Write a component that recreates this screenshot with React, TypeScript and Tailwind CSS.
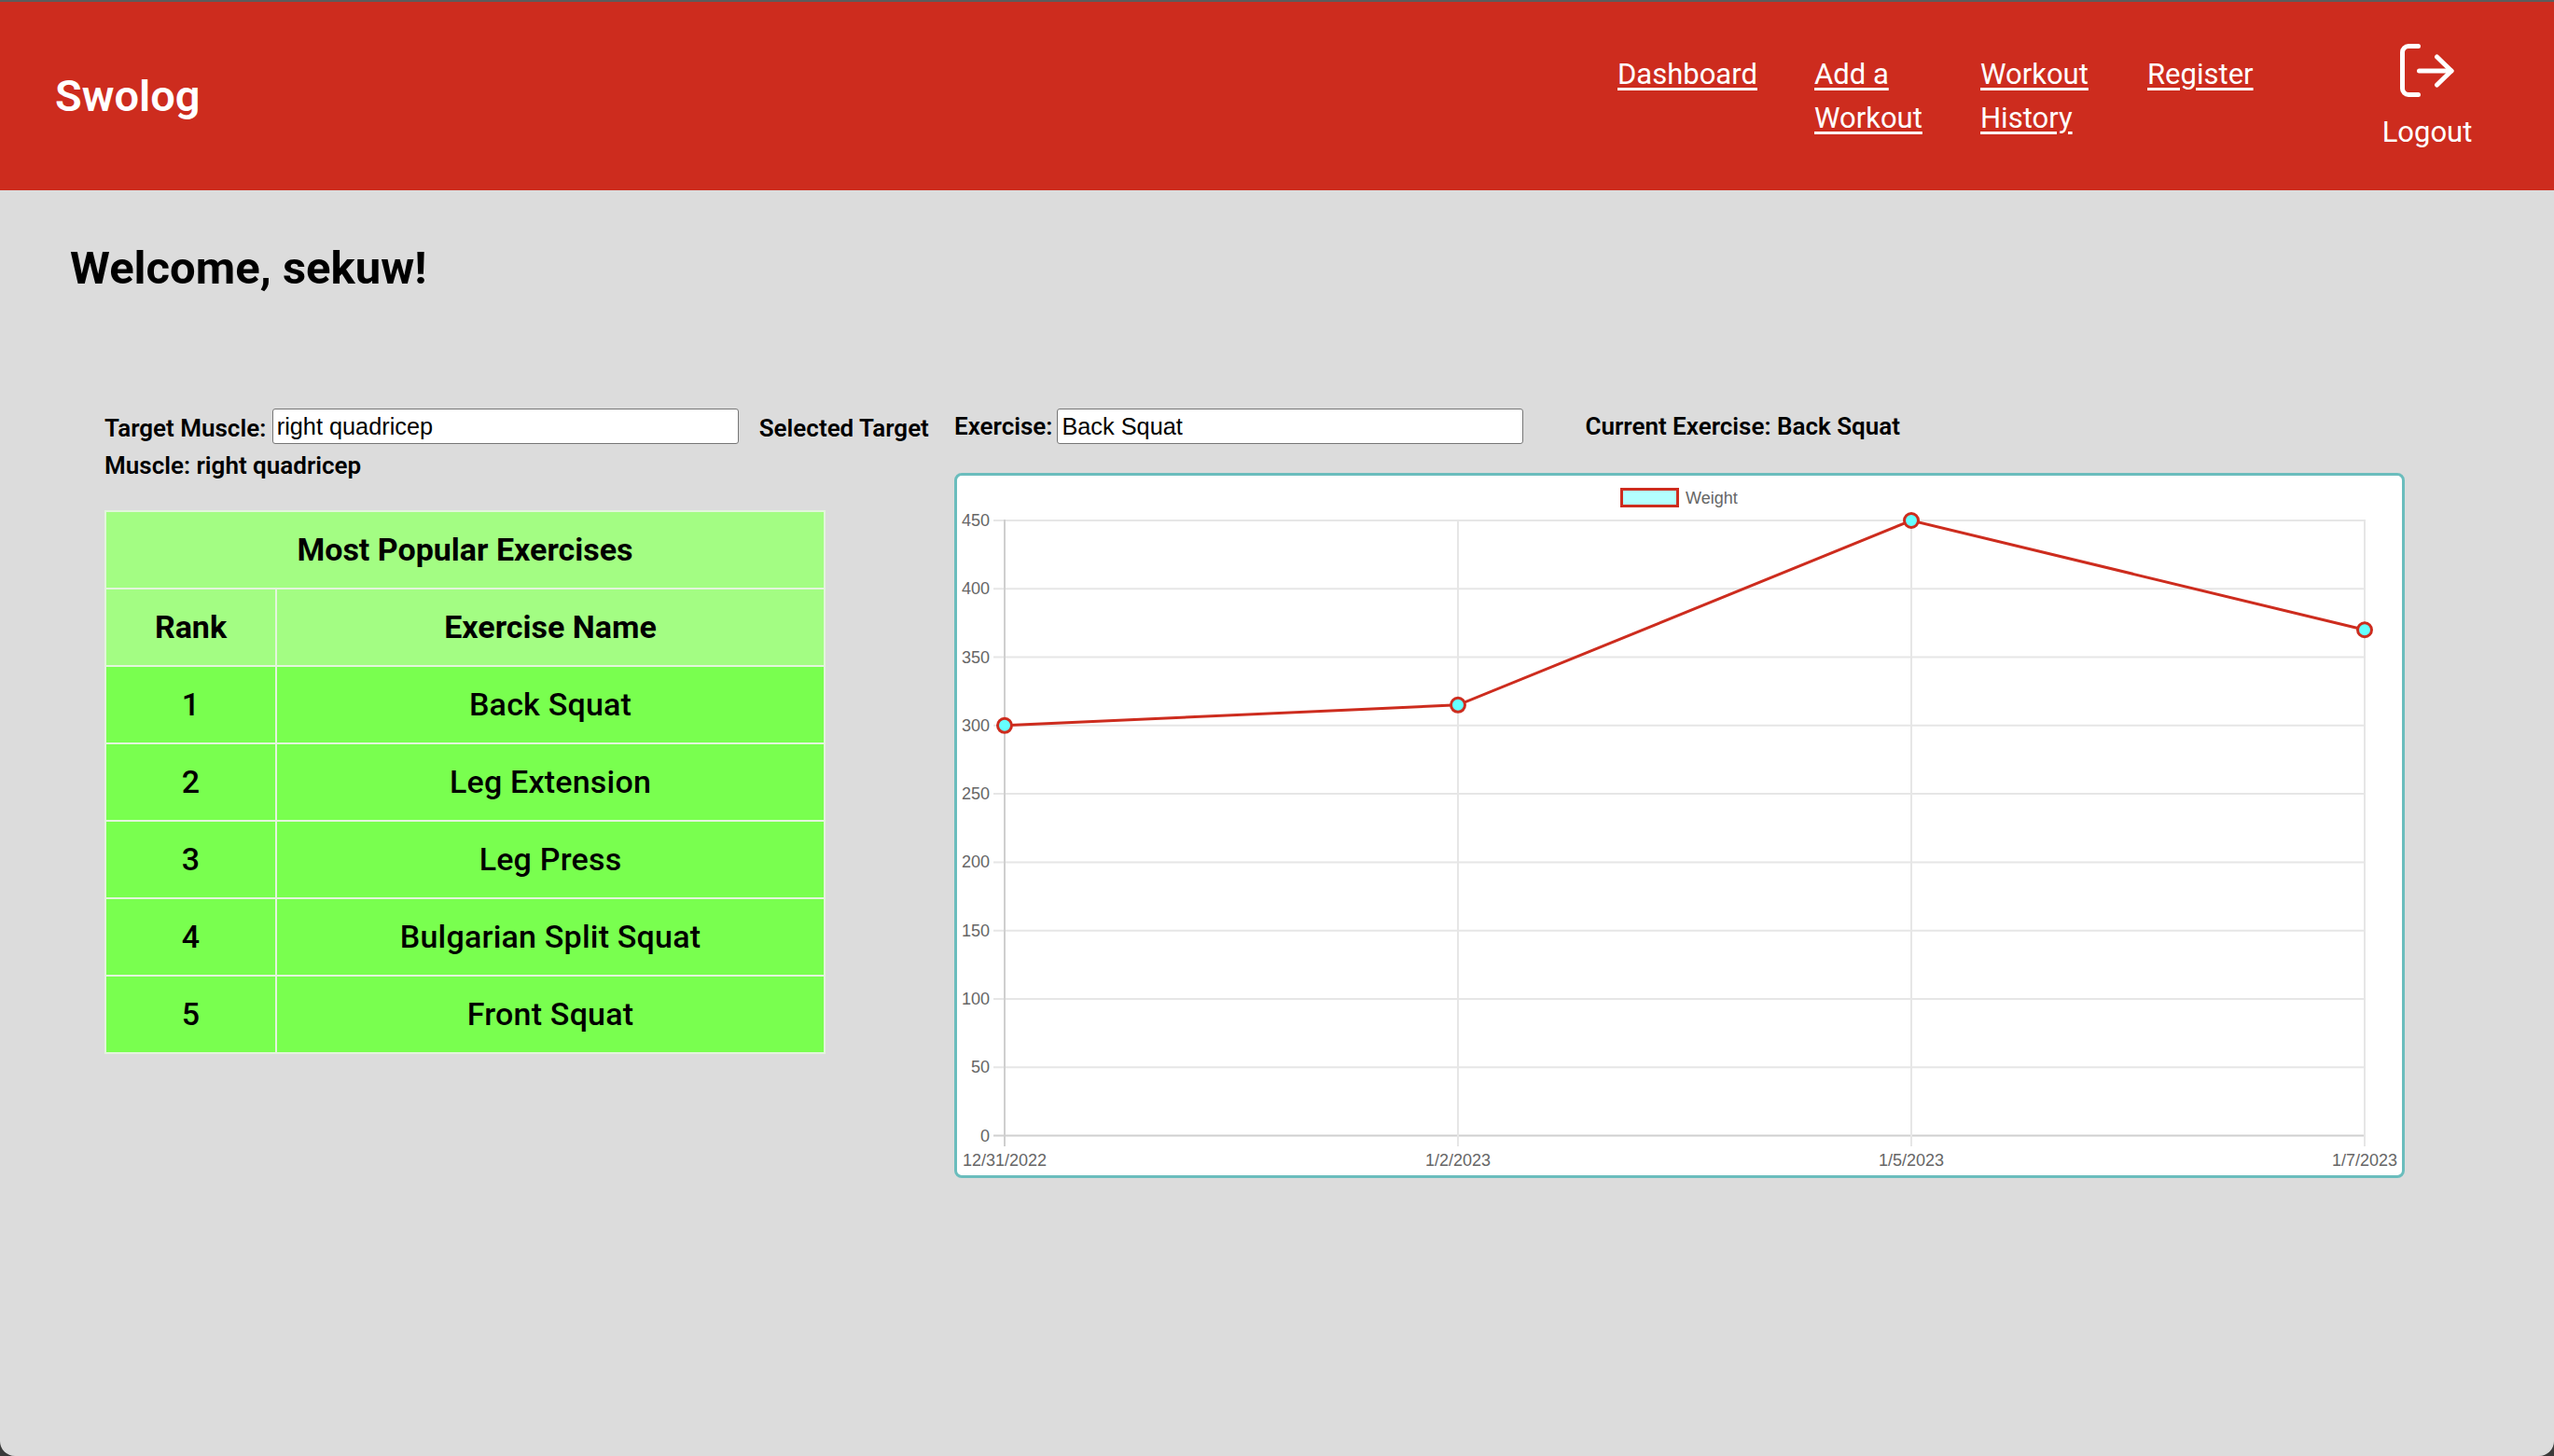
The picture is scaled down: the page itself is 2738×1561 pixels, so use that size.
import React from "react";

const navLinks = [
    { href: "#dashboard", label: "Dashboard", width: "w-[151px]" },
    { href: "#add", label: "Add a Workout", width: "w-[118px]" },
    { href: "#history", label: "Workout History", width: "w-[119px]" },
    { href: "#register", label: "Register", width: "w-[116px]" }
];

const exercises = ["Back Squat", "Leg Extension", "Leg Press", "Bulgarian Split Squat", "Front Squat"];

const LogoutIcon = () => (
    <svg width="58" height="58" viewBox="0 0 58 58" fill="none" stroke="white" strokeWidth="5" strokeLinecap="round" strokeLinejoin="round">
        <path d="M19.5 2.5H9a6.5 6.5 0 0 0-6.5 6.5v39a6.5 6.5 0 0 0 6.5 6.5h10.5" />
        <path d="M20.5 29H55" />
        <path d="M39.5 14L55 29 39.5 44" />
    </svg>
);

const WeightChart = () => {
    const xs = [51, 537, 1023, 1509];
    const values = [300, 315, 450, 370];
    const dates = ["12/31/2022", "1/2/2023", "1/5/2023", "1/7/2023"];
    const ticks = [0, 50, 100, 150, 200, 250, 300, 350, 400, 450];
    const yFor = (v: number) => 707.5 - (v * 659.5) / 450;
    const points = values.map((v, i) => `${xs[i]},${yFor(v)}`).join(" ");

    return (
        <svg width="1549" height="750" viewBox="0 0 1549 750" className="block" fontFamily="'Liberation Sans', Arial, sans-serif" fontSize="18" fill="#666666">
            {ticks.map((t) => (
                <g key={t}>
                    <line x1="39" x2="1509" y1={yFor(t)} y2={yFor(t)} stroke={t === 0 ? "#cfcfcf" : "#e6e6e6"} strokeWidth="2" />
                    <text x="35" y={yFor(t) + 6} textAnchor="end">{t}</text>
                </g>
            ))}
            {xs.map((x, i) => (
                <g key={x}>
                    <line x1={x} x2={x} y1="47" y2="719" stroke={i === 0 ? "#cfcfcf" : "#e6e6e6"} strokeWidth="2" />
                    <text x={x} y="740" textAnchor="middle">{dates[i]}</text>
                </g>
            ))}
            <rect x="712.5" y="14.5" width="60" height="18" fill="#b3ffff" stroke="#cd2c1e" strokeWidth="3" />
            <text x="781" y="30">Weight</text>
            <polyline points={points} fill="none" stroke="#cd2c1e" strokeWidth="3" />
            {values.map((v, i) => (
                <circle key={i} cx={xs[i]} cy={yFor(v)} r="7.5" fill="#66ffff" stroke="#cd2c1e" strokeWidth="3" />
            ))}
        </svg>
    );
};

const App = () => {
    return (
        <div className="h-[1561px] w-[2738px] overflow-hidden bg-[#3a3a3a] font-['Roboto',sans-serif]">
            <div className="h-full overflow-hidden rounded-b-[16px] border-t-2 border-[#5c5c5c] bg-[#dcdcdc]">
                <header className="flex h-[202px] items-center bg-[#cd2c1e] text-white">
                    <div className="ml-[59px] text-[47px] font-semibold">Swolog</div>
                    <nav className="ml-auto flex items-start">
                        {navLinks.map((link) => (
                            <a key={link.href} href={link.href} className={`mr-[60px] text-[31px] leading-[47px] underline underline-offset-[4px] ${link.width}`}>
                                {link.label}
                            </a>
                        ))}
                    </nav>
                    <button className="ml-[76px] mr-[88px] flex w-[96px] flex-col items-center gap-[19px] text-[31px]">
                        <LogoutIcon />
                        <span className="leading-[36px]">Logout</span>
                    </button>
                </header>

                <main className="pl-[75px]">
                    <h1 className="pt-[52px] text-[49px] leading-[64px] font-bold text-black">Welcome, sekuw!</h1>

                    <div className="mt-[118px] flex items-start pl-[37px]">
                        <section className="w-[911px]">
                            <div className="w-[890px] text-[26px] leading-[40px] font-semibold text-black">
                                <label>
                                    Target Muscle:{" "}
                                    <input
                                        defaultValue="right quadricep"
                                        className="h-[38px] w-[500px] rounded-[3px] border border-[#767676] bg-white px-[4px] align-[2px] font-['Liberation_Sans',sans-serif] text-[25.3px] font-normal"
                                    />
                                </label>
                                <span className="ml-[22px]">Selected Target Muscle: right quadricep</span>
                            </div>

                            <table className="mt-[28px] w-[773px] table-fixed border-collapse text-center text-[34px] text-black">
                                <colgroup>
                                    <col className="w-[183px]" />
                                    <col />
                                </colgroup>
                                <thead className="bg-[#a3fd83]">
                                    <tr className="h-[83px]">
                                        <th colSpan={2} className="border-2 border-[#e3f5dc] font-bold">Most Popular Exercises</th>
                                    </tr>
                                    <tr className="h-[83px]">
                                        <th className="border-2 border-[#e3f5dc] font-bold">Rank</th>
                                        <th className="border-2 border-[#e3f5dc] font-bold">Exercise Name</th>
                                    </tr>
                                </thead>
                                <tbody className="bg-[#79ff4f]">
                                    {exercises.map((exercise, i) => (
                                        <tr key={exercise} className="h-[83px]">
                                            <td className="border-2 border-[#e3f5dc] font-medium">{i + 1}</td>
                                            <td className="border-2 border-[#e3f5dc] font-medium tracking-[0.2px]">{exercise}</td>
                                        </tr>
                                    ))}
                                </tbody>
                            </table>
                        </section>

                        <section>
                            <div className="flex h-[38px] items-center text-[26px] font-semibold text-black">
                                <label className="flex items-center gap-[5px]">
                                    Exercise:
                                    <input
                                        defaultValue="Back Squat"
                                        className="h-[38px] w-[500px] rounded-[3px] border border-[#767676] bg-white px-[4px] font-['Liberation_Sans',sans-serif] text-[25.3px] font-normal"
                                    />
                                </label>
                                <span className="ml-[66px]">Current Exercise: Back Squat</span>
                            </div>
                            <div className="mt-[31px] w-[1555px] rounded-[8px] border-[3px] border-[#6bbdbd] bg-white">
                                <WeightChart />
                            </div>
                        </section>
                    </div>
                </main>
            </div>
        </div>
    );
};

export default App;
